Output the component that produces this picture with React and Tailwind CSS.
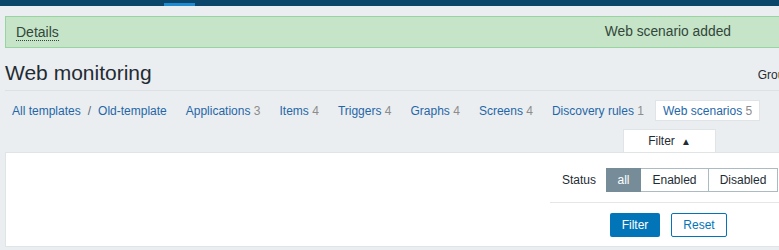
export default function App() {
  const tabs = [
    ["Applications", "3"],
    ["Items", "4"],
    ["Triggers", "4"],
    ["Graphs", "4"],
    ["Screens", "4"],
    ["Discovery rules", "1"],
  ];
  return (
    <div className="w-[779px] h-[250px] overflow-hidden bg-[#ebeef0] font-['Liberation_Sans',Arial,sans-serif] text-[#1f2c33]">
      <div className="h-[6px] bg-[#0a466a] flex items-end pl-[164px]">
        <div className="w-[31px] h-[3px] bg-[#1f8ad0]" />
      </div>
      <div className="mt-[10px] ml-[5px] w-[790px] h-[32px] border border-[#98d4a0] bg-[#c5e4c8] flex items-center pl-[10px] pr-[63px] text-[#33473a]">
        <span className="text-[14px] border-b border-dotted border-[#33473a] leading-[16px]">Details</span>
        <span className="ml-auto text-[13.8px]">Web scenario added</span>
      </div>
      <div className="ml-[5px] w-[790px] h-[43px] border-b border-[#dde1e4] flex items-start pt-[13px]">
        <h1 className="text-[21px] leading-[24px] text-[#1f2c33]">Web monitoring</h1>
        <span className="ml-auto mr-[4px] mt-[5px] text-[12px]">Group</span>
      </div>
      <div className="flex items-center mt-[9px] pl-[12px] text-[12px] leading-[14px] h-[21px]">
        <span className="text-[#1f67a8]">All templates</span>
        <span className="mx-[7px] text-[#5a6a73]">/</span>
        <span className="text-[#1f67a8]">Old-template</span>
        <div className="flex items-center gap-[3px] ml-[11px]">
          {tabs.map(([t, n]) => (
            <span key={t} className="px-[8px] h-[21px] flex items-center text-[#1f67a8]">
              {t}&nbsp;<span className="text-[#8c8c8c]">{n}</span>
            </span>
          ))}
          <span className="px-[7px] h-[21px] flex items-center bg-white border border-[#dfe4e7] text-[#1f67a8]">
            Web scenarios&nbsp;<span className="text-[#8c8c8c]">5</span>
          </span>
        </div>
      </div>
      <div className="flex justify-end mt-[8px] pr-[63px]">
        <div className="w-[93px] h-[23px] bg-white border border-b-0 border-[#dfe4e7] flex items-center justify-center text-[12px] gap-[6px]">
          <span>Filter</span>
          <span className="text-[10px]">▲</span>
        </div>
      </div>
      <div className="ml-[5px] w-[790px] h-[95px] bg-white border border-[#dfe4e7] flex justify-end">
        <div className="w-[244px] flex flex-col">
          <div className="flex items-center justify-end pr-[16px] pt-[15px] pb-[10px] border-b border-[#e3e7ea] text-[12px]">
            <span className="mr-[10px]">Status</span>
            <div className="flex h-[24px]">
              <span className="w-[35px] bg-[#768d99] text-white flex items-center justify-center border border-[#768d99]">all</span>
              <span className="w-[67px] border-y border-[#acbbc2] flex items-center justify-center">Enabled</span>
              <span className="w-[70px] border border-[#acbbc2] flex items-center justify-center">Disabled</span>
            </div>
          </div>
          <div className="flex mt-[10px] ml-[60px] gap-[11px] text-[12px]">
            <span className="w-[50px] h-[24px] bg-[#0275b8] text-white rounded-[2px] flex items-center justify-center">Filter</span>
            <span className="w-[56px] h-[24px] border border-[#0275b8] text-[#0275b8] rounded-[2px] flex items-center justify-center">Reset</span>
          </div>
        </div>
      </div>
    </div>
  );
}
